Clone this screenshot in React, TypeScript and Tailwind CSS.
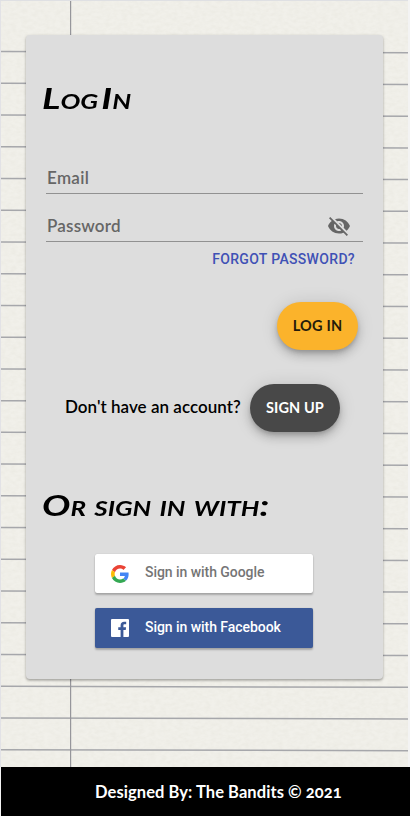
import React from "react";

const ruleCount = 23;

function Paper() {
  return (
    <svg className="absolute inset-0 h-full w-full" viewBox="0 0 410 767" preserveAspectRatio="none" aria-hidden="true">
      <defs>
        <filter id="grain" x="0" y="0" width="100%" height="100%">
          <feTurbulence type="fractalNoise" baseFrequency="0.18 0.3" numOctaves="3" seed="4" />
          <feColorMatrix values="0 0 0 0 0.5  0 0 0 0 0.48  0 0 0 0 0.38  0.16 0 0 0 -0.05" />
        </filter>
      </defs>
      <rect width="410" height="767" fill="#f1f0ea" />
      <rect width="410" height="767" filter="url(#grain)" />
      {Array.from({ length: ruleCount }, (_, i) => {
        const y = 51.6 + i * 31.73;
        return <line key={i} x1="0" y1={y} x2="410" y2={y + 1.1} stroke="#a6a7ab" strokeWidth="1.5" />;
      })}
      <line x1="70.6" y1="0" x2="70.6" y2="767" stroke="#96969b" strokeWidth="1.2" />
      <rect width="1" height="767" fill="#e2e2e6" />
      <rect width="410" height="1" fill="#dfe0e3" />
      <rect x="408" width="2" height="767" fill="#f3f3f3" />
    </svg>
  );
}

function HiddenEye() {
  return (
    <svg className="h-6 w-6" viewBox="0 0 24 24" fill="#666">
      <path d="M12 7c2.76 0 5 2.24 5 5 0 .65-.13 1.26-.36 1.83l2.92 2.92c1.51-1.26 2.7-2.89 3.43-4.75-1.73-4.39-6-7.5-11-7.5-1.4 0-2.74.25-3.98.7l2.16 2.16C10.74 7.13 11.35 7 12 7zM2 4.27l2.28 2.28.46.46C3.08 8.3 1.78 10.02 1 12c1.73 4.39 6 7.5 11 7.5 1.55 0 3.03-.3 4.38-.84l.42.42L19.73 22 21 20.73 3.27 3 2 4.27zM7.53 9.8l1.55 1.55c-.05.21-.08.43-.08.65 0 1.66 1.34 3 3 3 .22 0 .44-.03.65-.08l1.55 1.55c-.67.33-1.41.53-2.2.53-2.76 0-5-2.24-5-5 0-.79.2-1.53.53-2.2zm4.31-.78 3.15 3.15.02-.16c0-1.66-1.34-3-3-3l-.17.01z" />
    </svg>
  );
}

function GoogleMark() {
  return (
    <svg className="h-[18px] w-[18px]" viewBox="0 0 48 48">
      <path fill="#EA4335" d="M24 9.5c3.54 0 6.71 1.22 9.21 3.6l6.85-6.85C35.9 2.38 30.47 0 24 0 14.62 0 6.51 5.38 2.56 13.22l7.98 6.19C12.43 13.72 17.74 9.5 24 9.5z" />
      <path fill="#4285F4" d="M46.98 24.55c0-1.57-.15-3.09-.38-4.55H24v9.02h12.94c-.58 2.96-2.26 5.48-4.78 7.18l7.73 6c4.51-4.18 7.09-10.36 7.09-17.65z" />
      <path fill="#FBBC05" d="M10.53 28.59A14.5 14.5 0 0 1 9.77 24c0-1.6.27-3.14.76-4.59l-7.98-6.19A23.9 23.9 0 0 0 0 24c0 3.88.92 7.54 2.56 10.78l7.97-6.19z" />
      <path fill="#34A853" d="M24 48c6.48 0 11.93-2.13 15.89-5.81l-7.73-6c-2.15 1.45-4.92 2.3-8.16 2.3-6.26 0-11.57-4.22-13.47-9.91l-7.98 6.19C6.51 42.62 14.62 48 24 48z" />
    </svg>
  );
}

function FacebookMark() {
  return (
    <svg className="h-[18px] w-[18px]" viewBox="0 0 90 90">
      <path fill="#fff" d="M90 85A5 5 0 0 1 85 90H62V55.200H73.700L75.400 41.600H62V33C62 29 63.100 26.300 68.700 26.300H75.900V14.100C74.600 13.900 70.300 13.600 65.400 13.600C55 13.600 48 19.900 48 31.500V41.600H36.200V55.200H48V90H5A5 5 0 0 1 0 85V5A5 5 0 0 1 5 0H85A5 5 0 0 1 90 5Z" />
    </svg>
  );
}

export default function App() {
  return (
    <div className="flex h-[816px] w-[410px] flex-col overflow-hidden bg-[#f3f3f3] font-['Lato',sans-serif] text-black">
      <main className="relative h-[767px] shrink-0 px-[26px] pt-[35px]">
        <Paper />
        <section className="relative h-[644px] w-[357px] rounded-[4px] bg-[#ddd] px-4 shadow-[0_1px_3px_rgba(0,0,0,0.25),0_2px_2px_rgba(0,0,0,0.12)]">
          <h1 className="flex h-[126px] items-center whitespace-pre text-[29px] font-bold italic [font-variant-caps:small-caps]">
            <span className="inline-block origin-left scale-x-[1.32] [word-spacing:-4px]">Log In</span>
          </h1>
          <form className="ml-1 w-[317px]" onSubmit={(e) => e.preventDefault()}>
            <div className="flex h-[33px] items-center border-b border-[#919191] text-[17px] font-semibold leading-6 text-[#666]">
              <span className="ml-px pt-px tracking-[0.3px]">Email</span>
            </div>
            <div className="mt-[15px] flex h-[33px] items-center justify-between border-b border-[#919191] text-[17px] font-semibold leading-6 text-[#666]">
              <span className="ml-px pt-px tracking-[0.2px]">Password</span>
              <span className="mr-[12px] pt-px"><HiddenEye /></span>
            </div>
            <div className="flex h-[35px] justify-end pr-[8px] font-['Roboto',sans-serif] text-sm font-medium leading-[35px] text-[#3f51b5]">
              <span className="tracking-[0.33px]">FORGOT PASSWORD?</span>
            </div>
            <div className="mt-[25px] flex justify-end pr-[5px]">
              <button type="submit" className="h-[48px] w-[81px] whitespace-nowrap rounded-full bg-[#fbb32b] text-[14.5px] font-bold tracking-[0.2px] text-[#241b0b] shadow-[0_3px_5px_-1px_rgba(0,0,0,0.2),0_6px_10px_rgba(0,0,0,0.14),0_1px_18px_rgba(0,0,0,0.12)]">LOG IN</button>
            </div>
          </form>
          <div className="ml-[23px] mt-[34px] flex items-center">
            <p className="w-[185px] whitespace-nowrap pb-[3px] text-[17px] font-semibold leading-6 tracking-[0.03px]">Don't have an account?</p>
            <button type="button" className="h-[48px] w-[90px] whitespace-nowrap rounded-full bg-[#484848] text-[14.5px] font-bold tracking-[0.1px] text-white shadow-[0_3px_5px_-1px_rgba(0,0,0,0.2),0_6px_10px_rgba(0,0,0,0.14),0_1px_18px_rgba(0,0,0,0.12)]">SIGN UP</button>
          </div>
          <h2 className="mt-[49px] flex h-[48px] items-center whitespace-nowrap text-[29px] font-bold italic [font-variant-caps:small-caps]">
            <span className="inline-block origin-left scale-x-[1.3]">Or sign in with:</span>
          </h2>
          <div className="ml-[53px] mt-[25px] flex w-[218px] flex-col gap-[15px] font-['Roboto',sans-serif] text-sm font-medium">
            <button type="button" className="flex h-[39px] items-center gap-4 rounded-[2px] bg-white px-4 text-[#757575] shadow-[0_2px_2px_rgba(0,0,0,0.24),0_0_1px_rgba(0,0,0,0.24)]">
              <GoogleMark /><span className="pb-[3px] tracking-[-0.05px]">Sign in with Google</span>
            </button>
            <button type="button" className="flex h-[40px] items-center gap-4 rounded-[2px] bg-[#3b5998] px-4 text-white shadow-[0_2px_2px_rgba(0,0,0,0.24),0_0_1px_rgba(0,0,0,0.24)]">
              <FacebookMark /><span className="pb-[2px] tracking-[-0.05px]">Sign in with Facebook</span>
            </button>
          </div>
        </section>
      </main>
      <footer className="ml-px flex h-[49px] items-center bg-black pl-[94px] pt-px text-white">
        <span className="whitespace-nowrap text-[16.5px] font-bold tracking-[0.07px] [font-variant-numeric:oldstyle-nums]">Designed By: The Bandits © 2021</span>
      </footer>
    </div>
  );
}
